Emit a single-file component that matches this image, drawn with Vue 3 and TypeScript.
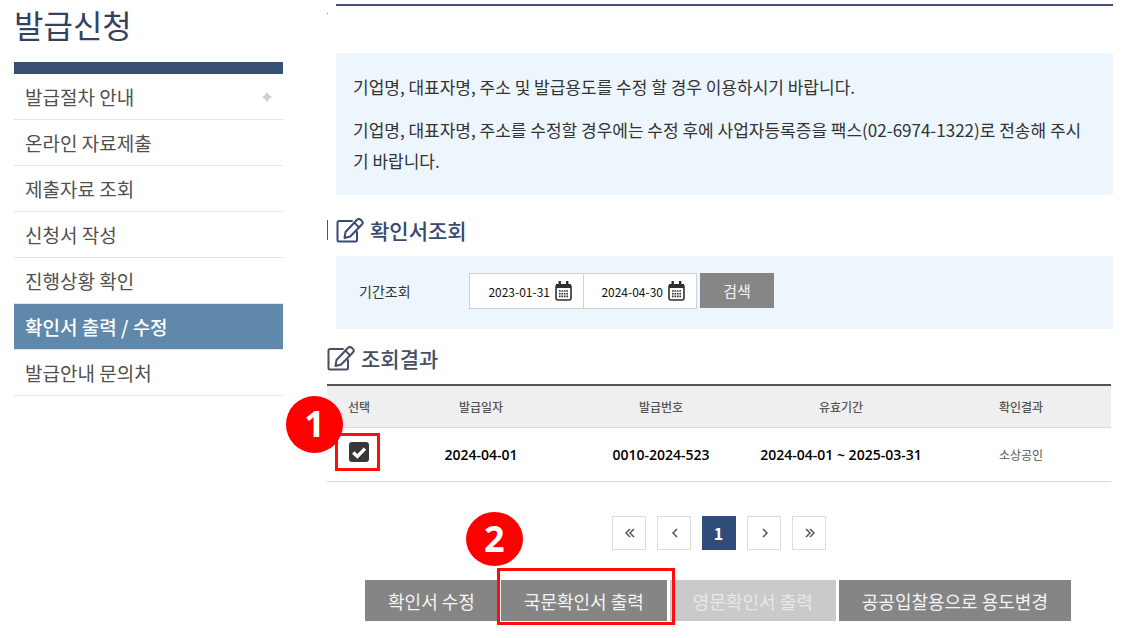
<script setup lang="ts">
import { ref } from 'vue'

interface MenuItem {
  label: string
  active?: boolean
  mark?: boolean
}

const menu: MenuItem[] = [
  { label: '발급절차 안내', mark: true },
  { label: '온라인 자료제출' },
  { label: '제출자료 조회' },
  { label: '신청서 작성' },
  { label: '진행상황 확인' },
  { label: '확인서 출력 / 수정', active: true },
  { label: '발급안내 문의처' },
]

const from = ref('2023-01-31')
const to = ref('2024-04-30')
const selected = ref(true)

const columns = ['선택', '발급일자', '발급번호', '유효기간', '확인결과']
</script>

<template>
  <div class="page">
    <nav class="side" aria-label="발급신청">
      <h1>발급신청</h1>
      <ul>
        <li v-for="item in menu" :key="item.label">
          <a href="#" :class="{ active: item.active }">
            <span>{{ item.label }}</span>
            <svg v-if="item.mark" width="10" height="10" viewBox="0 0 10 10" aria-hidden="true">
              <path d="M5 0 L7 3 L10 5 L7 7 L5 10 L3 7 L0 5 L3 3 Z" fill="#cfcfcf" />
            </svg>
          </a>
        </li>
      </ul>
    </nav>

    <main>
      <div class="rule"></div>
      <section class="notice">
        <p>기업명, 대표자명, 주소 및 발급용도를 수정 할 경우 이용하시기 바랍니다.</p>
        <p>기업명, 대표자명, 주소를 수정할 경우에는 수정 후에 사업자등록증을 팩스(02-6974-1322)로 전송해 주시기 바랍니다.</p>
      </section>

      <h2 class="title lined">
        <svg width="28" height="26" viewBox="0 0 28 26" aria-hidden="true">
          <g fill="none" stroke="currentColor" stroke-width="2" stroke-linejoin="round" stroke-linecap="round">
            <path d="M16 4H3A1.5 1.5 0 0 0 1.5 5.5V23a1.5 1.5 0 0 0 1.500 1.500H19.500a1.500 1.500 0 0 0 1.500-1.500V15" />
            <path d="M8.500 21l1-6L21 2.700a2.600 2.600 0 0 1 3.700 0l1.200 1.200a2.600 2.600 0 0 1 0 3.600L14.200 19.500z" />
            <path d="M18.300 5.600l4.800 4.800" />
          </g>
        </svg>
        확인서조회
      </h2>
      <form class="search" @submit.prevent>
        <label class="caption" for="from">기간조회</label>
        <div class="fields">
          <div class="date">
            <input id="from" v-model="from" type="text" />
            <svg width="17" height="20" viewBox="0 0 17 20" aria-hidden="true">
              <rect x="1" y="4" width="15" height="15" rx="2" fill="#fff" stroke="#2f2f33" stroke-width="1.6" />
              <path d="M1 3h15v4H1zM3.5 0h2.4v4H3.5zM11 0h2.4v4H11z" fill="#2f2f33" />
              <path d="M4 10h9M4 12.7h9M4 15.4h9" stroke="#2f2f33" stroke-width="1.6" stroke-dasharray="1.6 .87" />
            </svg>
          </div>
          <div class="date second">
            <input id="to" v-model="to" type="text" aria-label="종료일" />
            <svg width="17" height="20" viewBox="0 0 17 20" aria-hidden="true">
              <rect x="1" y="4" width="15" height="15" rx="2" fill="#fff" stroke="#2f2f33" stroke-width="1.6" />
              <path d="M1 3h15v4H1zM3.5 0h2.4v4H3.5zM11 0h2.4v4H11z" fill="#2f2f33" />
              <path d="M4 10h9M4 12.7h9M4 15.4h9" stroke="#2f2f33" stroke-width="1.6" stroke-dasharray="1.6 .87" />
            </svg>
          </div>
          <button type="submit">검색</button>
        </div>
      </form>

      <h2 class="title result">
        <svg width="28" height="26" viewBox="0 0 28 26" aria-hidden="true">
          <g fill="none" stroke="currentColor" stroke-width="2" stroke-linejoin="round" stroke-linecap="round">
            <path d="M16 4H3A1.5 1.5 0 0 0 1.5 5.5V23a1.5 1.5 0 0 0 1.500 1.500H19.500a1.500 1.500 0 0 0 1.500-1.500V15" />
            <path d="M8.500 21l1-6L21 2.700a2.600 2.600 0 0 1 3.700 0l1.200 1.200a2.600 2.600 0 0 1 0 3.600L14.200 19.500z" />
            <path d="M18.300 5.600l4.800 4.800" />
          </g>
        </svg>
        조회결과
      </h2>
      <table>
        <thead>
          <tr>
            <th v-for="c in columns" :key="c" scope="col">{{ c }}</th>
          </tr>
        </thead>
        <tbody>
          <tr>
            <td>
              <label class="check">
                <input v-model="selected" type="checkbox" aria-label="선택" />
                <svg v-if="selected" width="20" height="20" viewBox="0 0 20 20" aria-hidden="true">
                  <path d="M4.2 10.4l4.2 4L16 6.6" fill="none" stroke="#fff" stroke-width="3.4" />
                </svg>
                <span class="frame"></span>
                <span class="badge">1</span>
              </label>
            </td>
            <td class="strong">2024-04-01</td>
            <td class="strong">0010-2024-523</td>
            <td class="strong">2024-04-01 ~ 2025-03-31</td>
            <td>소상공인</td>
          </tr>
        </tbody>
      </table>

      <nav class="pager" aria-label="페이지">
        <button type="button" aria-label="처음">
          <svg width="12" height="10" viewBox="0 0 12 10"><path d="M7 1L3 5l4 4M11 1L7 5l4 4" /></svg>
        </button>
        <button type="button" aria-label="이전">
          <svg width="12" height="10" viewBox="0 0 12 10"><path d="M9 1L5 5l4 4" /></svg>
        </button>
        <button type="button" class="current" aria-current="page">1</button>
        <button type="button" aria-label="다음">
          <svg width="12" height="10" viewBox="0 0 12 10"><path d="M5 1l4 4-4 4" /></svg>
        </button>
        <button type="button" aria-label="마지막">
          <svg width="12" height="10" viewBox="0 0 12 10"><path d="M3 1l4 4-4 4M7 1l4 4-4 4" /></svg>
        </button>
      </nav>

      <div class="actions">
        <button type="button">확인서 수정</button>
        <div class="target">
          <button type="button">국문확인서 출력</button>
          <span class="frame"></span>
          <span class="badge">2</span>
        </div>
        <button type="button" class="off" disabled>영문확인서 출력</button>
        <button type="button">공공입찰용으로 용도변경</button>
      </div>
    </main>
  </div>
</template>

<style>
body {
  background: #fff;
}
</style>

<style scoped>
.page {
  display: flex;
  align-items: flex-start;
  gap: 44px;
  padding: 4px 10px 16px 14px;
  font-family: "Noto Sans CJK KR", "Noto Sans", sans-serif;
  color: #333;
}
.page * {
  box-sizing: border-box;
}
button,
input {
  font-family: inherit;
  margin: 0;
  padding: 0;
}
h1,
h2,
p,
ul {
  margin: 0;
  padding: 0;
}

.side {
  flex: 0 0 269px;
}
h1 {
  height: 58px;
  font-size: 32px;
  font-weight: 400;
  line-height: 40px;
  color: #35425f;
}
ul {
  list-style: none;
  border-top: 12px solid #374f72;
}
li {
  border-bottom: 1px solid #e4e4e4;
}
.side a {
  display: flex;
  align-items: center;
  justify-content: space-between;
  height: 45px;
  padding: 0 11px;
  font-size: 19px;
  color: #505050;
  text-decoration: none;
}
.side a.active {
  background: #6088aa;
  color: #fff;
  font-weight: 500;
}

main {
  flex: 1;
  min-width: 0;
}
.rule {
  position: relative;
  height: 2px;
  margin-left: 9px;
  background: #3c507a;
}
.rule::before {
  content: "";
  position: absolute;
  left: -9px;
  top: 9px;
  width: 1px;
  height: 1px;
  background: #6f9a9c;
}
.notice {
  margin: 47px 0 0 9px;
  padding: 18px 24px 19px 17px;
  background: #edf6fc;
  font-size: 17px;
  line-height: 31px;
}
.notice p + p {
  margin-top: 12px;
}
.title {
  display: flex;
  align-items: center;
  gap: 6px;
  font-size: 21px;
  font-weight: 500;
  line-height: 30px;
  color: #3a4a70;
}
.title svg {
  flex: none;
}
.lined {
  margin-top: 20px;
}
.lined::before {
  content: "";
  width: 1px;
  height: 20px;
  margin-right: 2px;
  background: #555;
}
.search {
  display: flex;
  align-items: center;
  margin: 11px 0 0 9px;
  padding: 17px 23px 20px;
  background: #edf6fc;
}
.caption {
  flex: 0 0 110px;
  font-size: 14px;
}
.fields {
  display: flex;
}
.date {
  display: flex;
  align-items: center;
  gap: 5px;
  width: 115px;
  height: 36px;
  padding-right: 11px;
  border: 1px solid #ccd2da;
  background: #fff;
}
.date.second {
  width: 114px;
  margin-left: -1px;
}
.date svg {
  flex: none;
}
.date input {
  flex: 1;
  min-width: 0;
  border: 0;
  background: none;
  text-align: right;
  font-size: 12px;
  color: #111;
}
.fields button {
  width: 74px;
  height: 35px;
  margin-left: 3px;
  border: 0;
  background: #868686;
  color: #f4f4f4;
  font-size: 15px;
}
.result {
  margin-top: 14px;
  color: #465063;
}

table {
  width: calc(100% - 2px);
  margin-top: 11px;
  border-collapse: separate;
  border-spacing: 0;
  table-layout: fixed;
  border-top: 2px solid #555;
  font-size: 12px;
  color: #555;
}
th,
td {
  padding: 0;
  text-align: center;
}
th:first-child {
  width: 64px;
}
th {
  height: 42px;
  font-weight: 500;
  background: #efefef;
  border-bottom: 1px solid #d9d9d9;
}
td {
  height: 54px;
  border-bottom: 1px solid #d9d9d9;
}
.strong {
  font-family: "Open Sans", "Noto Sans", sans-serif;
  font-size: 14px;
  font-weight: 600;
  color: #000;
}
.check {
  position: relative;
  display: block;
  width: 20px;
  height: 20px;
  margin: 0 auto 6px;
}
.check input {
  appearance: none;
  display: block;
  width: 20px;
  height: 20px;
  border: 2px solid #38383b;
  border-radius: 3px;
}
.check input:checked {
  background: #38383b;
}
.check svg {
  position: absolute;
  inset: 0;
}
.frame {
  position: absolute;
  border: 3px solid #fd0d0d;
  pointer-events: none;
}
.check .frame {
  inset: -9px -11px -9px -14px;
}
.badge {
  position: absolute;
  display: flex;
  align-items: center;
  justify-content: center;
  width: 57px;
  height: 57px;
  border-radius: 50%;
  background: #fe0000;
  color: #fff;
  font-family: "Open Sans", "Noto Sans", sans-serif;
  font-size: 36px;
  font-weight: 700;
  line-height: 1;
  pointer-events: none;
}
.check .badge {
  right: 26px;
  bottom: 9px;
}

.pager {
  display: flex;
  justify-content: center;
  gap: 11px;
  margin: 34px 3px 0 0;
}
.pager button {
  display: flex;
  align-items: center;
  justify-content: center;
  width: 34px;
  height: 34px;
  border: 1px solid #dcdcdc;
  background: #fff;
}
.pager path {
  fill: none;
  stroke: #555;
  stroke-width: 1.5;
}
.pager .current {
  border-color: #2f4d78;
  background: #2f4d78;
  color: #fff;
  font-size: 16px;
  font-weight: 700;
}

.actions {
  display: flex;
  justify-content: center;
  gap: 3px;
  margin-top: 30px;
  padding-right: 4px;
}
.actions button {
  display: block;
  height: 41px;
  padding: 0 23px;
  border: 0;
  background: #858585;
  color: #f4f4f4;
  font-size: 18px;
  white-space: nowrap;
}
.actions .off {
  background: #cacaca;
  color: #e8e8e8;
}
.target {
  position: relative;
}
.target .frame {
  inset: -12px -8px -4px -4px;
}
.target .badge {
  left: -35px;
  bottom: 55px;
  height: 54px;
}
</style>
